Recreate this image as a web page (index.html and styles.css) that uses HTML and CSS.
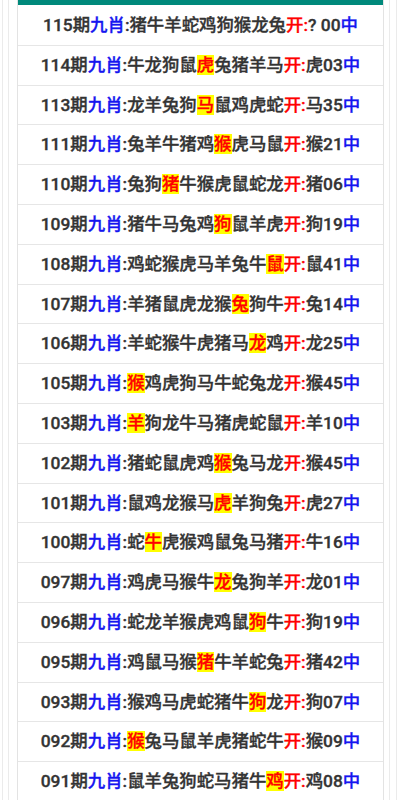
FILE: index.html
```html
<!DOCTYPE html>
<html lang="zh-CN">
<head>
    <meta charset="UTF-8">
    <meta name="viewport" content="width=device-width, initial-scale=1.0">
    <title>九肖</title>
    <link rel="stylesheet" href="styles.css">
</head>
<body>
    <div class="outer">
        <div class="inner">
            <div class="box">
                <div class="box-top"></div>
                <ul class="list">
                    <li>115期<span class="blue">九肖</span>:猪牛羊蛇鸡狗猴龙兔<span class="red">开:</span>? 00<span class="blue">中</span></li>
                    <li>114期<span class="blue">九肖</span>:牛龙狗鼠<span class="hit">虎</span>兔猪羊马<span class="red">开:</span>虎03<span class="blue">中</span></li>
                    <li>113期<span class="blue">九肖</span>:龙羊兔狗<span class="hit">马</span>鼠鸡虎蛇<span class="red">开:</span>马35<span class="blue">中</span></li>
                    <li>111期<span class="blue">九肖</span>:兔羊牛猪鸡<span class="hit">猴</span>虎马鼠<span class="red">开:</span>猴21<span class="blue">中</span></li>
                    <li>110期<span class="blue">九肖</span>:兔狗<span class="hit">猪</span>牛猴虎鼠蛇龙<span class="red">开:</span>猪06<span class="blue">中</span></li>
                    <li>109期<span class="blue">九肖</span>:猪牛马兔鸡<span class="hit">狗</span>鼠羊虎<span class="red">开:</span>狗19<span class="blue">中</span></li>
                    <li>108期<span class="blue">九肖</span>:鸡蛇猴虎马羊兔牛<span class="hit">鼠</span><span class="red">开:</span>鼠41<span class="blue">中</span></li>
                    <li>107期<span class="blue">九肖</span>:羊猪鼠虎龙猴<span class="hit">兔</span>狗牛<span class="red">开:</span>兔14<span class="blue">中</span></li>
                    <li>106期<span class="blue">九肖</span>:羊蛇猴牛虎猪马<span class="hit">龙</span>鸡<span class="red">开:</span>龙25<span class="blue">中</span></li>
                    <li>105期<span class="blue">九肖</span>:<span class="hit">猴</span>鸡虎狗马牛蛇兔龙<span class="red">开:</span>猴45<span class="blue">中</span></li>
                    <li>103期<span class="blue">九肖</span>:<span class="hit">羊</span>狗龙牛马猪虎蛇鼠<span class="red">开:</span>羊10<span class="blue">中</span></li>
                    <li>102期<span class="blue">九肖</span>:猪蛇鼠虎鸡<span class="hit">猴</span>兔马龙<span class="red">开:</span>猴45<span class="blue">中</span></li>
                    <li>101期<span class="blue">九肖</span>:鼠鸡龙猴马<span class="hit">虎</span>羊狗兔<span class="red">开:</span>虎27<span class="blue">中</span></li>
                    <li>100期<span class="blue">九肖</span>:蛇<span class="hit">牛</span>虎猴鸡鼠兔马猪<span class="red">开:</span>牛16<span class="blue">中</span></li>
                    <li>097期<span class="blue">九肖</span>:鸡虎马猴牛<span class="hit">龙</span>兔狗羊<span class="red">开:</span>龙01<span class="blue">中</span></li>
                    <li>096期<span class="blue">九肖</span>:蛇龙羊猴虎鸡鼠<span class="hit">狗</span>牛<span class="red">开:</span>狗19<span class="blue">中</span></li>
                    <li>095期<span class="blue">九肖</span>:鸡鼠马猴<span class="hit">猪</span>牛羊蛇兔<span class="red">开:</span>猪42<span class="blue">中</span></li>
                    <li>093期<span class="blue">九肖</span>:猴鸡马虎蛇猪牛<span class="hit">狗</span>龙<span class="red">开:</span>狗07<span class="blue">中</span></li>
                    <li>092期<span class="blue">九肖</span>:<span class="hit">猴</span>兔马鼠羊虎猪蛇牛<span class="red">开:</span>猴09<span class="blue">中</span></li>
                    <li>091期<span class="blue">九肖</span>:鼠羊兔狗蛇马猪牛<span class="hit">鸡</span><span class="red">开:</span>鸡08<span class="blue">中</span></li>
                </ul>
            </div>
        </div>
    </div>
</body>
</html>
```

FILE: styles.css
```css
body {
    margin: 0;
    background-color: #fff;
    font-family: Roboto, "Noto Sans CJK SC", sans-serif;
    overflow: hidden;
}

/* two thin frames round the box */
.outer {
    margin: 0 3px 0 2px;
    padding: 0 6px 0 5px;
    border-left: 1px solid #ebebeb;
    border-right: 1px solid #ebebeb;
    min-height: 100vh;
}

.inner {
    padding: 0 5px 0 8px;
    border-left: 1px solid #ebebeb;
    border-right: 1px solid #ebebeb;
    min-height: 100vh;
}

.box {
    border-left: 1px solid #e3e3e3;
    border-right: 1px solid #e3e3e3;
}

.box-top {
    height: 5px;
    background-color: #00897b;
}

.list {
    list-style: none;
    margin: 0;
    padding: 1px 0 0 0;
}

.list li {
    height: 38.8px;
    line-height: 38.8px;
    border-bottom: 1px solid #e6e6e6;
    text-align: center;
    font-size: 17.4px;
    font-weight: 500;
    color: #333;
    white-space: nowrap;
    -webkit-text-stroke: 0.35px currentColor; /* medium weight look */
}

.blue {
    color: #1515f0;
}

.red {
    color: #ff0000;
}

/* the animal that came out */
.hit {
    color: #ff0000;
    background-color: #ffff00;
}
```
